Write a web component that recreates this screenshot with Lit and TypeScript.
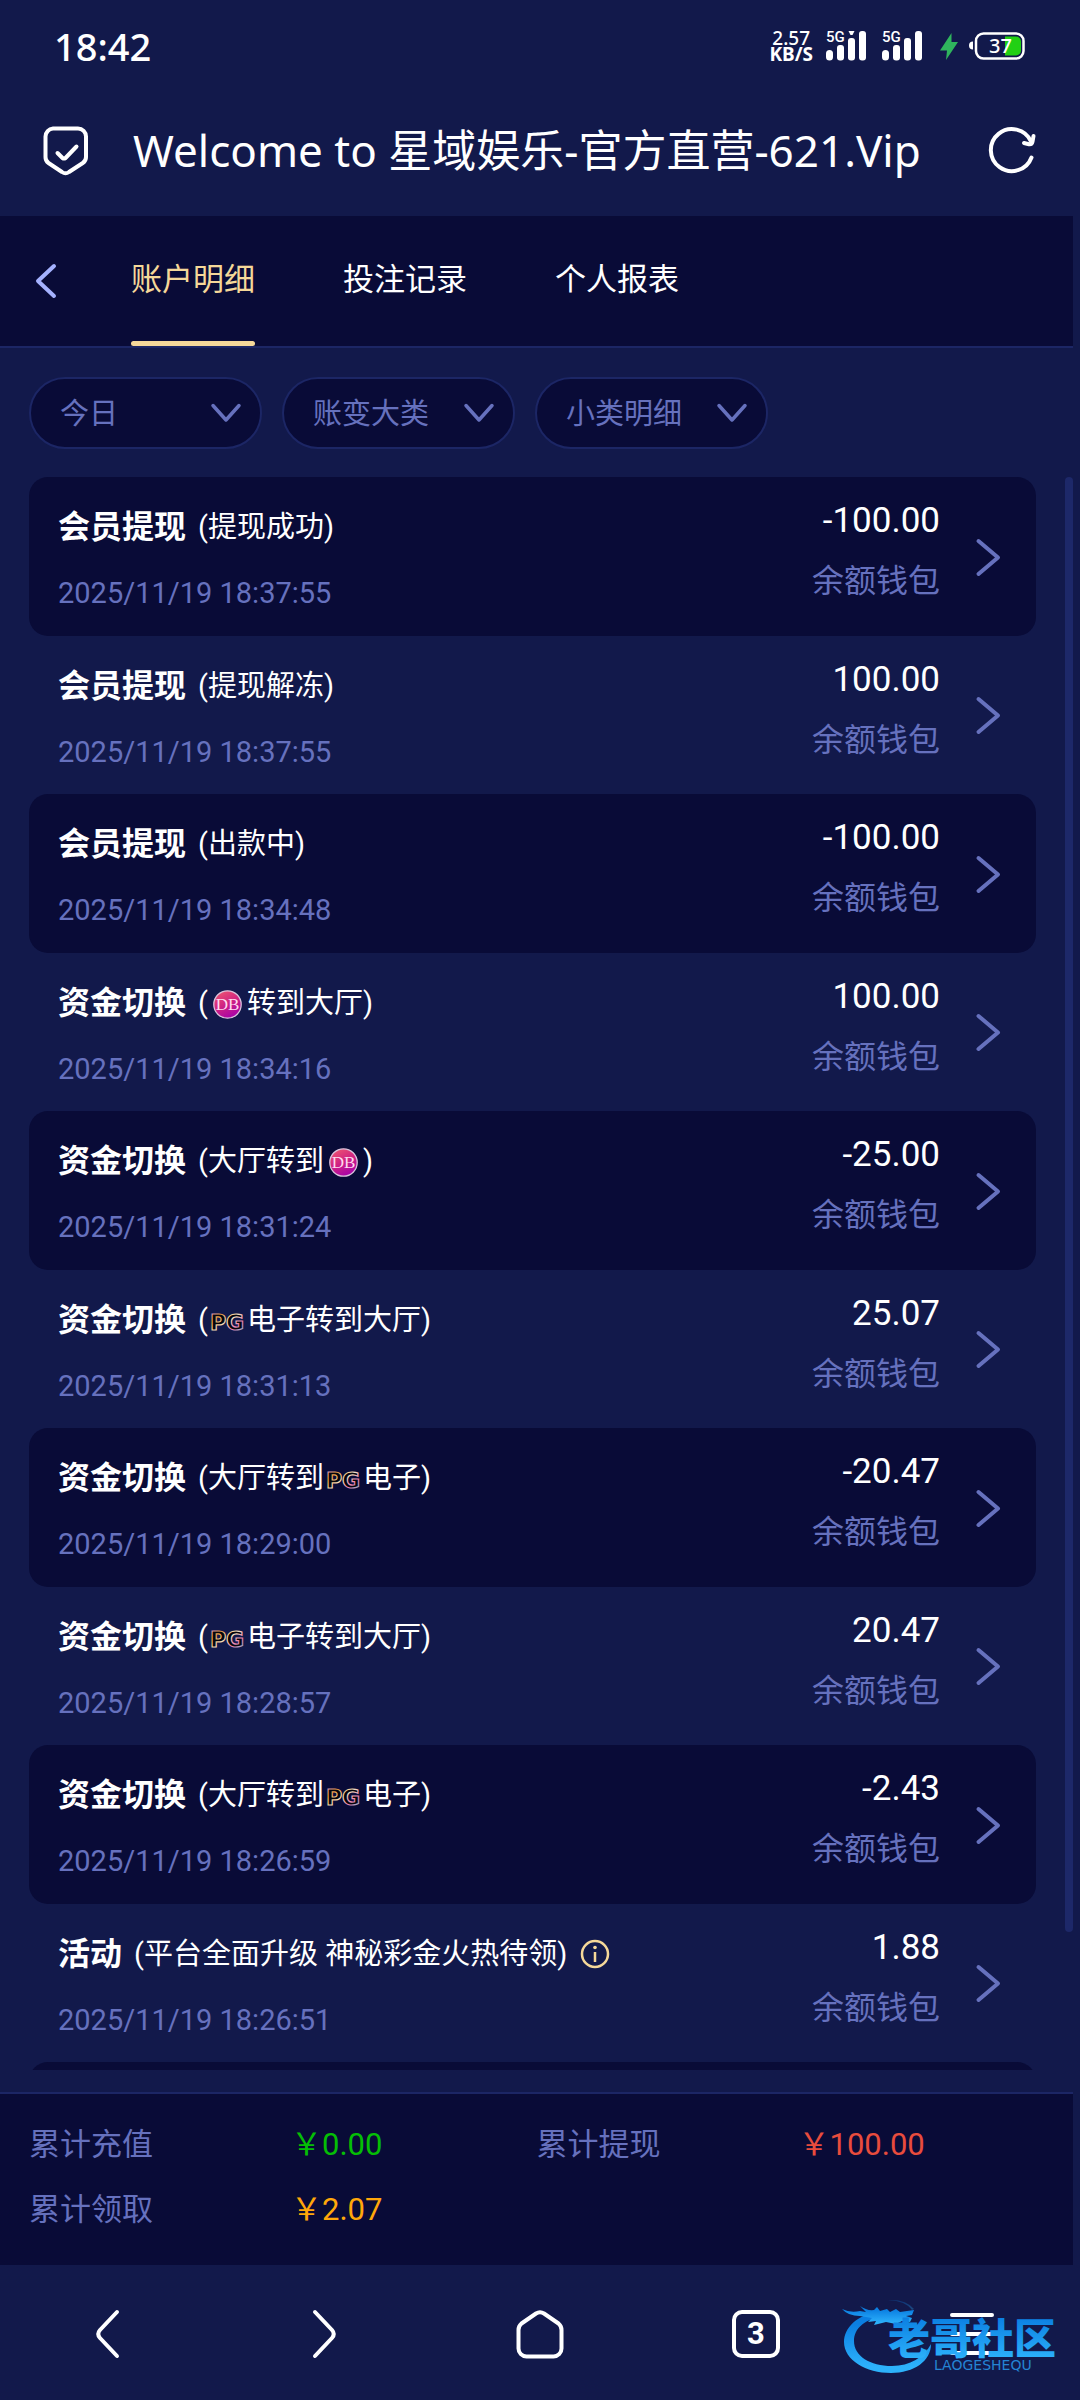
import { LitElement, html, css, svg, nothing } from "lit";
import { customElement, property, state } from "lit/decorators.js";
import { classMap } from "lit/directives/class-map.js";

type Part = string | { logo: "db" | "pg" };

interface Entry {
  title: string;
  detail: Part[];
  time: string;
  amount: string;
  info?: boolean;
}

const DB: Part = { logo: "db" };
const PG: Part = { logo: "pg" };

const ENTRIES: Entry[] = [
  { title: "会员提现", detail: ["提现成功"], time: "2025/11/19 18:37:55", amount: "-100.00" },
  { title: "会员提现", detail: ["提现解冻"], time: "2025/11/19 18:37:55", amount: "100.00" },
  { title: "会员提现", detail: ["出款中"], time: "2025/11/19 18:34:48", amount: "-100.00" },
  { title: "资金切换", detail: [DB, "转到大厅"], time: "2025/11/19 18:34:16", amount: "100.00" },
  { title: "资金切换", detail: ["大厅转到", DB], time: "2025/11/19 18:31:24", amount: "-25.00" },
  { title: "资金切换", detail: [PG, "电子转到大厅"], time: "2025/11/19 18:31:13", amount: "25.07" },
  { title: "资金切换", detail: ["大厅转到", PG, "电子"], time: "2025/11/19 18:29:00", amount: "-20.47" },
  { title: "资金切换", detail: [PG, "电子转到大厅"], time: "2025/11/19 18:28:57", amount: "20.47" },
  { title: "资金切换", detail: ["大厅转到", PG, "电子"], time: "2025/11/19 18:26:59", amount: "-2.43" },
  { title: "活动", detail: ["平台全面升级 神秘彩金火热待领"], time: "2025/11/19 18:26:51", amount: "1.88", info: true },
];

const tokens = css`
  :host {
    --page: #12194b;
    --deep: #090b37;
    --line: #1c2665;
    --muted: #6671be;
    --gold: #f5d899;
    display: block;
    box-sizing: border-box;
    font-family: Roboto, "Noto Sans CJK SC", sans-serif;
    color: #fff;
  }
  *, *::before, *::after { box-sizing: border-box; }
  button {
    margin: 0;
    padding: 0;
    border: 0;
    background: none;
    color: inherit;
    font: inherit;
  }
  svg { display: block; overflow: visible; }
`;

@customElement("status-bar")
class StatusBar extends LitElement {
  static styles = [tokens, css`
    .bar {
      display: flex;
      align-items: center;
      height: 92px;
      padding: 0 55px 0 54px;
      font-family: "Noto Sans", sans-serif;
    }
    .clock { font-size: 38px; line-height: 40px; font-weight: 500; margin-right: auto; }
    .speed {
      display: flex;
      flex-direction: column;
      align-items: center;
      font-size: 19px;
      line-height: 16px;
      font-weight: 500;
      margin-right: 13px;
    }
    .unit { font-weight: 700; }
    .signal { margin-right: 16px; }
    .bolt { margin: 0 12px 0 2px; }
    .tag { font: 500 15px Roboto, sans-serif; fill: #fff; }
    .level { font: 500 20px "Noto Sans", sans-serif; fill: #fff; text-anchor: middle; }
  `];

  private signal(active: boolean) {
    return html`<svg class="signal" width="40" height="30" viewBox="0 0 40 30" aria-hidden="true">
      <text class="tag" x="0" y="11">5G</text>
      <g fill="#fff">
        <rect x="0" y="19" width="7" height="10.500" rx="3.500" />
        <rect x="11" y="14" width="7" height="15.500" rx="3" />
        <rect x="22" y="7" width="7" height="22.500" rx="3" />
        <rect x="33" y="0" width="7" height="29.500" rx="3" />
        ${active ? svg`<path d="M22.500 0h6l-2 4h-2z" />` : nothing}
      </g>
    </svg>`;
  }

  render() {
    return html`<div class="bar">
      <span class="clock">18:42</span>
      <span class="speed"><span>2.57</span><span class="unit">KB/S</span></span>
      ${this.signal(true)} ${this.signal(false)}
      <svg class="bolt" width="18" height="27" viewBox="0 0 18 27" aria-hidden="true">
        <path fill="#2fb45d" d="M11.500 0 0 17.500h7L6 27 18 9h-6.500z" />
      </svg>
      <svg width="55" height="28" viewBox="0 0 55 28" aria-hidden="true">
        <path d="M3 9.500v8a4 4 0 0 1 0-8z" fill="#fff" />
        <rect x="6" y="1.500" width="47.500" height="25" rx="7.500" fill="none" stroke="#fff" stroke-width="2.500" />
        <path d="M35 4.500h11a5 5 0 0 1 5 5v9a5 5 0 0 1-5 5H35z" fill="#22d014" />
        <text class="level" x="30.500" y="21">37</text>
      </svg>
    </div>`;
  }
}

@customElement("browser-header")
class BrowserHeader extends LitElement {
  static styles = [tokens, css`
    .header {
      display: flex;
      align-items: center;
      height: 124px;
      padding: 0 44px 8px 42px;
    }
    .title {
      flex: 1;
      margin: 0 0 0 44px;
      font: 400 44px/60px "Noto Sans", "Noto Sans CJK SC", sans-serif;
      white-space: nowrap;
    }
  `];

  render() {
    return html`<header class="header">
      <svg width="47" height="50" viewBox="0 0 47 50" fill="none" stroke="#fff" stroke-width="4" stroke-linecap="round" stroke-linejoin="round" aria-hidden="true">
        <path d="M11 3.500h25a8 8 0 0 1 8 8V32a7 7 0 0 1-3.200 6L27 47a6 6 0 0 1-7 0L6.500 38A7 7 0 0 1 3.500 32V11.500A8 8 0 0 1 11 3.500z" />
        <path d="M15.500 28l5 5q1.500 1 3 0L34.500 21.500" />
      </svg>
      <h1 class="title">Welcome to 星域娱乐-官方直营-621.Vip</h1>
      <button type="button" aria-label="刷新">
        <svg width="48" height="48" viewBox="0 0 48 48" fill="none" stroke="#fff" stroke-width="4" stroke-linecap="round" stroke-linejoin="round" aria-hidden="true">
          <path d="M43.500 31.500A21 21 0 1 1 43 15.500" />
          <path d="M36 17l5 1.200q3 .3 3.500-2.500L45.500 10" />
        </svg>
      </button>
    </header>`;
  }
}

@customElement("tab-strip")
class TabStrip extends LitElement {
  @state() private current = 0;
  private tabs = ["账户明细", "投注记录", "个人报表"];

  static styles = [tokens, css`
    .strip {
      display: flex;
      height: 132px;
      padding-left: 34px;
      background: var(--deep);
      border-bottom: 2px solid var(--line);
    }
    .back { width: 24px; margin-right: 73px; }
    .tabs { display: flex; gap: 88px; }
    .tab {
      padding-bottom: 3px;
      font-size: 31px;
      line-height: 40px;
      position: relative;
    }
    .tab.on { color: var(--gold); }
    .tab.on::after {
      content: "";
      position: absolute;
      left: 0;
      right: 0;
      bottom: 0;
      height: 5px;
      border-radius: 3px;
      background: var(--gold);
    }
  `];

  render() {
    return html`<nav class="strip">
      <button class="back" type="button" aria-label="返回">
        <svg width="24" height="36" viewBox="0 0 24 36" fill="none" stroke="#a5b2ff" stroke-width="4" stroke-linecap="round" stroke-linejoin="round" aria-hidden="true">
          <path d="M20 3 4 18l16 15" />
        </svg>
      </button>
      <div class="tabs">
        ${this.tabs.map((name, i) => html`<button type="button"
          class=${classMap({ tab: true, on: i === this.current })}
          @click=${() => { this.current = i; }}>${name}</button>`)}
      </div>
    </nav>`;
  }
}

@customElement("filter-bar")
class FilterBar extends LitElement {
  static styles = [tokens, css`
    .filters { display: flex; gap: 20px; padding: 29px 29px 28px; }
    .filter { display: grid; align-items: center; width: 233px; }
    .pick, .arrow { grid-area: 1 / 1; }
    .pick {
      appearance: none;
      width: 100%;
      height: 72px;
      margin: 0;
      padding: 2px 60px 0 29px;
      border: 2px solid var(--line);
      border-radius: 36px;
      background: var(--deep);
      color: var(--muted);
      font: 400 29px Roboto, "Noto Sans CJK SC", sans-serif;
    }
    .arrow { justify-self: end; margin-right: 20px; pointer-events: none; }
  `];

  render() {
    return html`<div class="filters">
      ${["今日", "账变大类", "小类明细"].map((name) => html`<label class="filter">
        <select class="pick" aria-label=${name}><option>${name}</option></select>
        <svg class="arrow" width="32" height="20" viewBox="0 0 32 20" fill="none" stroke="#6671be" stroke-width="3.500" stroke-linecap="round" stroke-linejoin="round" aria-hidden="true">
          <path d="M3 2.500 16 17 29 2.500" />
        </svg>
      </label>`)}
    </div>`;
  }
}

@customElement("brand-logo")
class BrandLogo extends LitElement {
  @property() name: "db" | "pg" = "db";

  static styles = [tokens, css`
    :host { display: flex; align-items: center; justify-content: center; width: 39px; padding-top: 2px; }
    .db { font: 400 17px "Liberation Serif", serif; fill: #ffd9ee; text-anchor: middle; }
    .pg {
      font: 700 22px "DejaVu Sans", sans-serif;
      fill: #05050c;
      stroke: url(#edge);
      stroke-width: 1.200px;
      text-anchor: middle;
    }
  `];

  render() {
    if (this.name === "pg") {
      return html`<svg width="36" height="20" viewBox="0 0 36 20" role="img" aria-label="PG">
        <defs>
          <linearGradient id="edge" x1="0" y1="0" x2="1" y2="1">
            <stop offset="0" stop-color="#c58cff" />
            <stop offset=".25" stop-color="#f0a040" />
            <stop offset=".5" stop-color="#f4e3c4" />
            <stop offset=".7" stop-color="#ef7fae" />
            <stop offset="1" stop-color="#58c8dc" />
          </linearGradient>
        </defs>
        <text class="pg" x="18" y="19">PG</text>
      </svg>`;
    }
    return html`<svg width="29" height="29" viewBox="0 0 29 29" role="img" aria-label="DB">
      <defs>
        <linearGradient id="disc" x1=".2" y1="0" x2=".7" y2="1">
          <stop offset="0" stop-color="#ee5570" />
          <stop offset=".5" stop-color="#cf2283" />
          <stop offset="1" stop-color="#a400ac" />
        </linearGradient>
      </defs>
      <circle cx="14.500" cy="14.500" r="13.700" fill="url(#disc)" stroke="#d9c3dc" stroke-width="1.300" />
      <text class="db" x="14.500" y="20">DB</text>
    </svg>`;
  }
}

@customElement("record-list")
class RecordList extends LitElement {
  static styles = [tokens, css`
    :host { flex: 1; min-height: 0; display: flex; padding-left: 29px; margin-bottom: 22px; }
    .list {
      flex: 1;
      margin: 0 29px 0 0;
      padding: 0;
      list-style: none;
      overflow-y: auto;
      scrollbar-width: none;
    }
    .row {
      display: flex;
      height: 158px;
      padding: 0 36px 0 29px;
      border-radius: 19px;
    }
    .row:nth-child(odd) { height: 159px; background: var(--deep); }
    .main { flex: 1; min-width: 0; padding-top: 30px; }
    .head { display: flex; align-items: center; height: 40px; white-space: nowrap; }
    .title { font-size: 32px; line-height: 40px; font-weight: 700; margin: 0 12px 0 0; }
    .detail { display: flex; font-size: 29px; line-height: 40px; }
    .info { margin-left: 13px; }
    .time { display: block; margin-top: 28px; font-size: 29px; line-height: 36px; color: var(--muted); }
    .side { padding-top: 24px; text-align: right; }
    .amount { font-size: 35px; line-height: 40px; }
    .wallet { margin-top: 20px; font-size: 32px; line-height: 40px; color: var(--muted); }
    .open { margin-left: 34px; }
    .track { width: 8px; }
    .thumb { height: 1455px; max-height: 92%; border-radius: 4px; background: #1d2869; }
  `];

  render() {
    return html`<ul class="list">
        ${ENTRIES.map((e) => html`<li class="row">
          <div class="main">
            <div class="head">
              <h2 class="title">${e.title}</h2>
              <span class="detail">(${e.detail.map((p) => typeof p === "string"
                ? html`<span>${p}</span>`
                : html`<brand-logo name=${p.logo}></brand-logo>`)})</span>
              ${e.info ? html`<button class="info" type="button" aria-label="说明">
                <svg width="30" height="30" viewBox="0 0 30 30" aria-hidden="true">
                  <circle cx="15" cy="15" r="13" fill="none" stroke="#f5d899" stroke-width="2.500" />
                  <circle cx="15" cy="8.500" r="1.800" fill="#f5d899" />
                  <path d="M15 13v10" stroke="#f5d899" stroke-width="2.500" />
                </svg>
              </button>` : nothing}
            </div>
            <time class="time">${e.time}</time>
          </div>
          <div class="side">
            <div class="amount">${e.amount}</div>
            <div class="wallet">余额钱包</div>
          </div>
          <button class="open" type="button" aria-label="查看详情">
            <svg width="26" height="40" viewBox="0 0 26 40" fill="none" stroke="#6671be" stroke-width="4" stroke-linecap="round" stroke-linejoin="round" aria-hidden="true">
              <path d="M4.500 4 24 20.500 4.500 37" />
            </svg>
          </button>
        </li>`)}
        <li class="row"></li>
      </ul>
      <div class="track"><div class="thumb"></div></div>`;
  }
}

@customElement("totals-bar")
class TotalsBar extends LitElement {
  static styles = [tokens, css`
    .totals {
      display: grid;
      grid-template-columns: 1fr 1fr;
      row-gap: 25px;
      height: 173px;
      margin: 0;
      padding: 31px 29px;
      align-content: start;
      background: var(--deep);
      border-top: 2px solid var(--line);
      font-size: 31px;
      line-height: 40px;
    }
    .item { display: grid; grid-template-columns: 262px 1fr; }
    .name { color: var(--muted); }
    .value { margin: 0; }
    .green { color: #05be05; }
    .red { color: #e84c3d; }
    .amber { color: #ffa70a; }
  `];

  render() {
    const items = [
      ["累计充值", "￥0.00", "green"],
      ["累计提现", "￥100.00", "red"],
      ["累计领取", "￥2.07", "amber"],
    ];
    return html`<dl class="totals">
      ${items.map(([name, value, tone]) => html`<div class="item">
        <dt class="name">${name}</dt>
        <dd class=${classMap({ value: true, [tone]: true })}>${value}</dd>
      </div>`)}
    </dl>`;
  }
}

@customElement("browser-nav")
class BrowserNav extends LitElement {
  static styles = [tokens, css`
    .nav {
      display: grid;
      grid-template-columns: repeat(5, 1fr);
      height: 135px;
      padding-top: 2px;
      align-items: center;
    }
    .key { display: grid; place-items: center; height: 100%; }
    .count { font: 700 31px Roboto, sans-serif; fill: #fff; text-anchor: middle; }
  `];

  private key(label: string, art: unknown) {
    return html`<button class="key" type="button" aria-label=${label}>
      <svg width="50" height="50" viewBox="0 0 50 50" fill="none" stroke="#fff" stroke-width="4" stroke-linecap="round" stroke-linejoin="round" aria-hidden="true">${art}</svg>
    </button>`;
  }

  render() {
    return html`<nav class="nav">
      ${this.key("后退", svg`<path d="M34 3 17 21q-3.500 4 0 8L34 47" />`)}
      ${this.key("前进", svg`<path d="M16 3 33 21q3.500 4 0 8L16 47" />`)}
      ${this.key("主页", svg`<path d="M21 4.500q4-2.500 8 0L43.500 14.500Q46.500 17 46.500 21V39.500a8 8 0 0 1-8 8h-27a8 8 0 0 1-8-8V21Q3.500 17 6.500 14.500z" />`)}
      ${this.key("标签页", svg`<rect x="3" y="3" width="44" height="44" rx="8" /><text class="count" x="25" y="35" stroke="none">3</text>`)}
      ${this.key("菜单", svg`<path d="M5 6h40M5 25h40M5 44h40" />`)}
    </nav>`;
  }
}

@customElement("site-badge")
class SiteBadge extends LitElement {
  static styles = [tokens, css`
    :host { position: absolute; right: 10px; bottom: 20px; pointer-events: none; }
    .name { font: 900 42px "Noto Sans CJK SC", sans-serif; fill: url(#tint); }
    .sub { font: 400 14px "DejaVu Sans", sans-serif; fill: #2484d4; }
  `];

  render() {
    return html`<svg width="230" height="80" viewBox="0 0 230 80" role="img" aria-label="老哥社区">
      <defs>
        <linearGradient id="tint" x1="0" y1="0" x2="0" y2="1">
          <stop offset=".2" stop-color="#0b7fe2" />
          <stop offset=".9" stop-color="#2db2fb" />
        </linearGradient>
      </defs>
      <g fill="url(#tint)">
        <path d="M40 12C17 14 4 28 4 42 4 60 26 73 51 73 74 73 91 61 91 44 84 57 70 66 52 66 30 66 14 56 14 41 14 28 25 20 38 18z" />
        <path d="M2 9Q10 13 20 11L26 12 20 6Q27 11 34 10L37 7 40 11 47 9 50 12 56 9 60 12 74 10 72 15 66 16 72 18 70 22 62 21 56 24 46 22 34 25 36 21 28 22 32 18 20 16Q8 16 2 9z" />
        <path d="M72 10Q66 1 48 0 66-1 74 9z" opacity=".3" />
      </g>
      <text class="name" x="48" y="54">老哥社区</text>
      <text class="sub" x="94" y="70">LAOGESHEQU</text>
    </svg>`;
  }
}

@customElement("app-root")
class AppRoot extends LitElement {
  static styles = [tokens, css`
    :host { background: var(--page); }
    .page { position: relative; display: flex; flex-direction: column; height: 100vh; overflow: hidden; }
    .content { flex: 1; min-height: 0; display: flex; flex-direction: column; margin-right: 7px; }
  `];

  render() {
    return html`<div class="page">
      <status-bar></status-bar>
      <browser-header></browser-header>
      <main class="content">
        <tab-strip></tab-strip>
        <filter-bar></filter-bar>
        <record-list></record-list>
        <totals-bar></totals-bar>
      </main>
      <browser-nav></browser-nav>
      <site-badge></site-badge>
    </div>`;
  }
}
